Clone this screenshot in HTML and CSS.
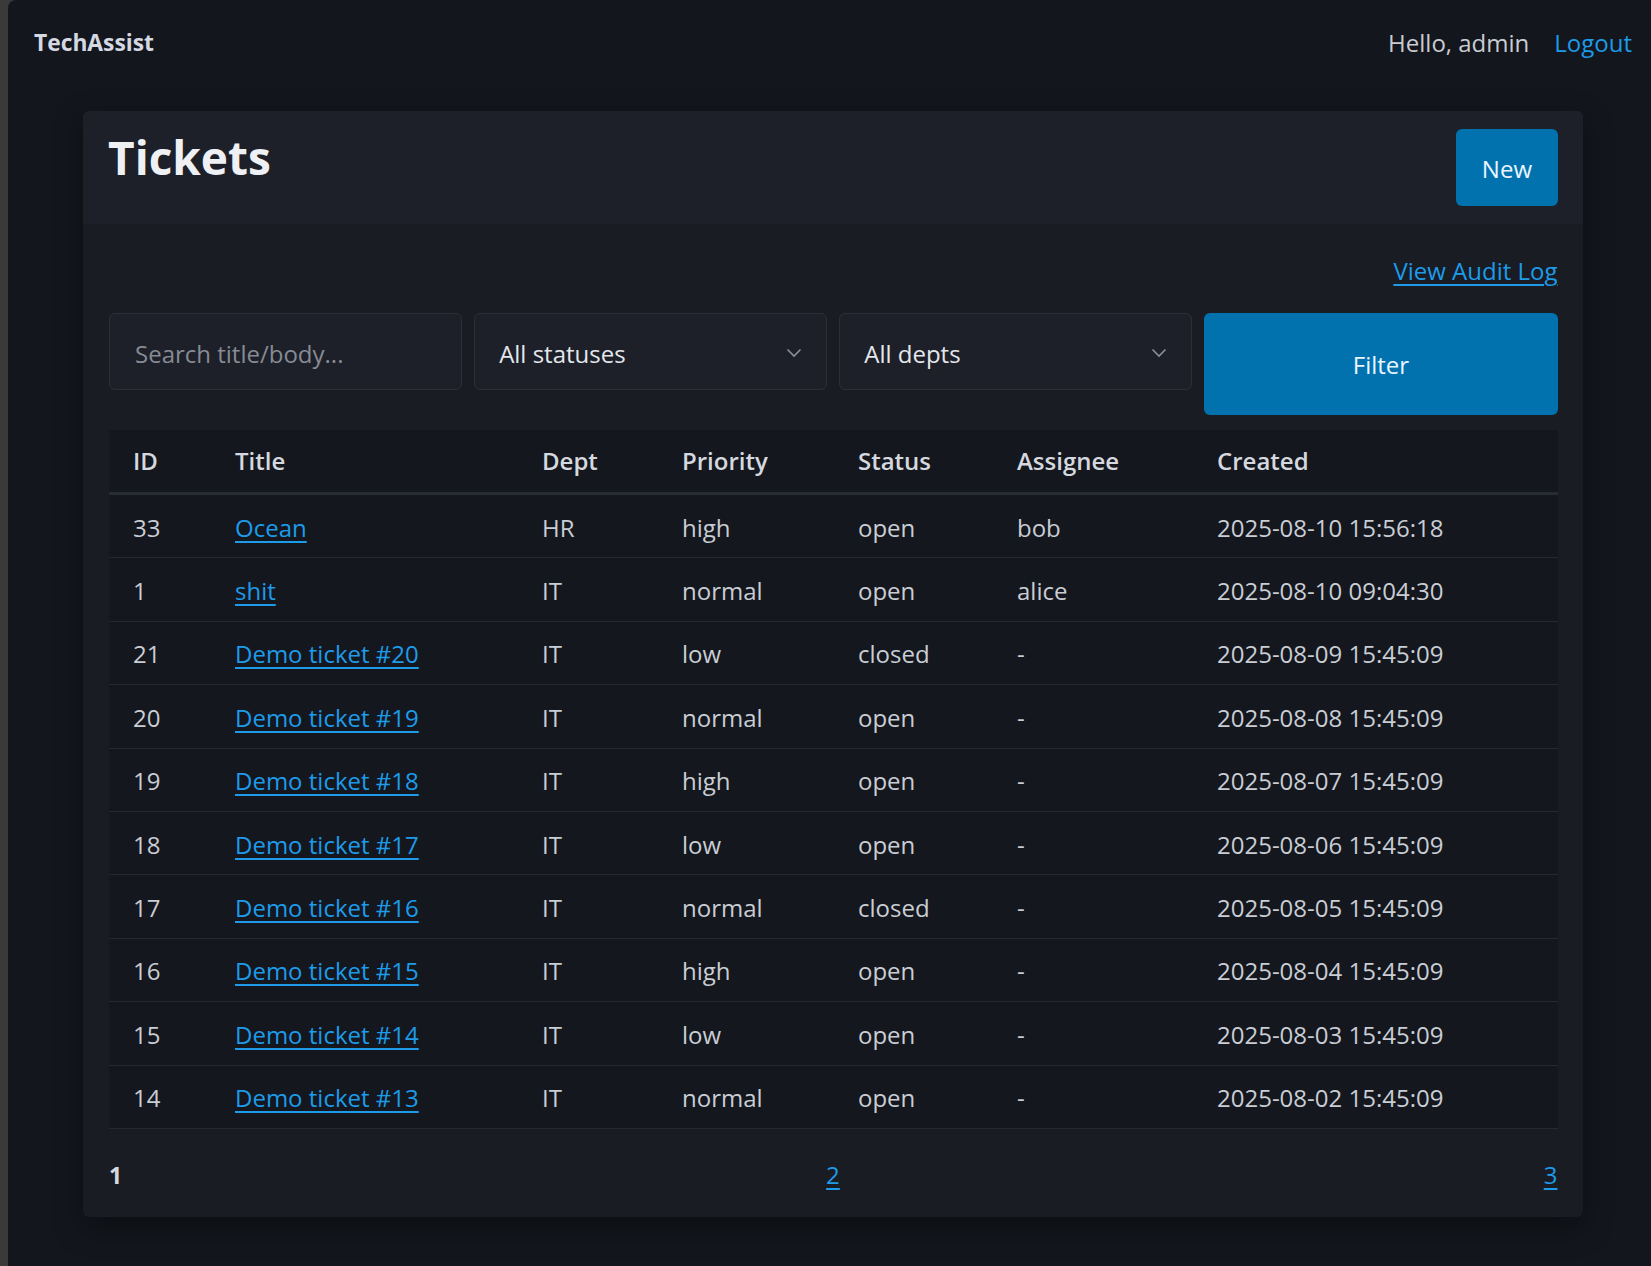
FILE: index.html
```html
<!DOCTYPE html>
<html lang="en">
<head>
<meta charset="utf-8">
<title>Tickets - TechAssist</title>
<link rel="stylesheet" href="styles.css">
</head>
<body>
<div class="frame">
  <header class="nav">
    <div class="brand">TechAssist</div>
    <div class="nav-right">
      <span class="hello">Hello, admin</span>
      <a class="link" href="#">Logout</a>
    </div>
  </header>

  <main class="card">
    <div class="card-head">
      <h1 class="title">Tickets</h1>
      <a class="btn btn-new" href="#">New</a>
    </div>
    <div class="card-body">
      <div class="toolbar"><a class="link ul" href="#">View Audit Log</a></div>

      <form class="filters">
        <input class="field" type="text" placeholder="Search title/body...">
        <div class="select-wrap">
          <select class="field"><option>All statuses</option><option>open</option><option>closed</option></select>
          <svg class="chev" width="16" height="10" viewBox="0 0 16 10"><path d="M1.5 1.5 L8 8 L14.5 1.5" fill="none" stroke="#8a8f99" stroke-width="1.6"/></svg>
        </div>
        <div class="select-wrap">
          <select class="field"><option>All depts</option><option>IT</option><option>HR</option></select>
          <svg class="chev" width="16" height="10" viewBox="0 0 16 10"><path d="M1.5 1.5 L8 8 L14.5 1.5" fill="none" stroke="#8a8f99" stroke-width="1.6"/></svg>
        </div>
        <button class="btn btn-filter" type="button">Filter</button>
      </form>

      <table class="tickets">
        <colgroup>
          <col class="c-id"><col class="c-title"><col class="c-dept"><col class="c-prio"><col class="c-status"><col class="c-assignee"><col class="c-created">
        </colgroup>
        <thead>
          <tr><th>ID</th><th>Title</th><th>Dept</th><th>Priority</th><th>Status</th><th>Assignee</th><th>Created</th></tr>
        </thead>
        <tbody>
          <tr><td>33</td><td><a class="link ul" href="#">Ocean</a></td><td>HR</td><td>high</td><td>open</td><td>bob</td><td>2025-08-10 15:56:18</td></tr>
          <tr><td>1</td><td><a class="link ul" href="#">shit</a></td><td>IT</td><td>normal</td><td>open</td><td>alice</td><td>2025-08-10 09:04:30</td></tr>
          <tr><td>21</td><td><a class="link ul" href="#">Demo ticket #20</a></td><td>IT</td><td>low</td><td>closed</td><td>-</td><td>2025-08-09 15:45:09</td></tr>
          <tr><td>20</td><td><a class="link ul" href="#">Demo ticket #19</a></td><td>IT</td><td>normal</td><td>open</td><td>-</td><td>2025-08-08 15:45:09</td></tr>
          <tr><td>19</td><td><a class="link ul" href="#">Demo ticket #18</a></td><td>IT</td><td>high</td><td>open</td><td>-</td><td>2025-08-07 15:45:09</td></tr>
          <tr><td>18</td><td><a class="link ul" href="#">Demo ticket #17</a></td><td>IT</td><td>low</td><td>open</td><td>-</td><td>2025-08-06 15:45:09</td></tr>
          <tr><td>17</td><td><a class="link ul" href="#">Demo ticket #16</a></td><td>IT</td><td>normal</td><td>closed</td><td>-</td><td>2025-08-05 15:45:09</td></tr>
          <tr><td>16</td><td><a class="link ul" href="#">Demo ticket #15</a></td><td>IT</td><td>high</td><td>open</td><td>-</td><td>2025-08-04 15:45:09</td></tr>
          <tr><td>15</td><td><a class="link ul" href="#">Demo ticket #14</a></td><td>IT</td><td>low</td><td>open</td><td>-</td><td>2025-08-03 15:45:09</td></tr>
          <tr><td>14</td><td><a class="link ul" href="#">Demo ticket #13</a></td><td>IT</td><td>normal</td><td>open</td><td>-</td><td>2025-08-02 15:45:09</td></tr>
        </tbody>
      </table>

      <nav class="pager">
        <strong class="current">1</strong>
        <a class="link ul" href="#">2</a>
        <a class="link ul" href="#">3</a>
      </nav>
    </div>
  </main>
</div>
</body>
</html>
```
FILE: styles.css
```css
* { box-sizing: border-box; }

html, body {
  margin: 0;
  padding: 0;
}

body {
  background: #3a3a3b;
  font-family: "Open Sans", "Noto Sans", "DejaVu Sans", sans-serif;
  font-size: 24px;
  line-height: 36px;
  color: #c9cdd4;
}

.frame {
  margin-left: 8px;
  min-height: 1266px;
  background: #13161c;
  border-top-left-radius: 8px;
  padding-bottom: 40px;
}

.nav {
  display: flex;
  justify-content: space-between;
  align-items: center;
  padding: 25px 19px 0 26px;
}

.brand {
  font-weight: 700;
  font-size: 22.8px;
  color: #d3d8e2;
}

.nav-right {
  display: flex;
  align-items: center;
  gap: 25px;
}

.hello {
  color: #c9ccd2;
}

.link {
  color: #1d9be9;
  text-decoration: none;
}

.link.ul {
  text-decoration: underline;
  text-decoration-thickness: 1.5px;
  text-underline-offset: 4px;
}

.card {
  width: 1500px;
  margin: 50px 0 0 75px;
  background: #191c23;
  border-radius: 6px;
  box-shadow: 0 10px 30px rgba(0, 0, 0, 0.35);
  overflow: hidden;
}

.card-head {
  display: flex;
  justify-content: space-between;
  align-items: flex-start;
  padding: 18px 25px 18px 25px;
  background: #1d2029;
}

.title {
  margin: 0;
  font-size: 46px;
  line-height: 57px;
  font-weight: 700;
  color: #eef0f4;
}

.btn {
  display: inline-block;
  border: 0;
  border-radius: 6px;
  background: #0272af;
  color: #eaf6ff;
  font-family: inherit;
  font-size: 24px;
  line-height: 36px;
  text-decoration: none;
  cursor: pointer;
}

.btn-new {
  padding: 21.5px 26px 19.5px;
}

.card-body {
  padding: 29px 25.5px 24px 26px;
}

.toolbar {
  text-align: right;
  margin-bottom: 24px;
}

.filters {
  display: grid;
  grid-template-columns: repeat(4, 1fr);
  gap: 12px;
  align-items: start;
  margin: 0 0 15px;
}

.field {
  width: 100%;
  height: 77px;
  padding: 3px 24px 0 25px;
  border: 1px solid #2b2f38;
  border-radius: 6px;
  background: #1d2029;
  color: #e4e7eb;
  font-family: inherit;
  font-size: 24px;
  outline: none;
}

.field::placeholder {
  color: #868b95;
}

select.field {
  appearance: none;
  -webkit-appearance: none;
  padding-left: 24px;
}

.select-wrap {
  position: relative;
}

.chev {
  position: absolute;
  right: 25px;
  top: 35px;
  pointer-events: none;
}

.btn-filter {
  width: 100%;
  height: 102px;
  padding-top: 3px;
}

.tickets {
  width: 100%;
  border-collapse: collapse;
  table-layout: fixed;
  background: #14171e;
}

.c-id { width: 102px; }
.c-title { width: 307px; }
.c-dept { width: 140px; }
.c-prio { width: 176px; }
.c-status { width: 159px; }
.c-assignee { width: 200px; }

.tickets th {
  padding: 13px 24px;
  text-align: left;
  font-weight: 600;
  color: #d5d9df;
  border-bottom: 3px solid #272b34;
}

.tickets td {
  padding: 14.6px 24px 11.8px;
  border-bottom: 1px solid #242831;
  white-space: nowrap;
}

.pager {
  display: flex;
  justify-content: space-between;
  margin-top: 28px;
}

.current {
  font-weight: 700;
  color: #d5d9df;
  font-size: 23px;
}
```
